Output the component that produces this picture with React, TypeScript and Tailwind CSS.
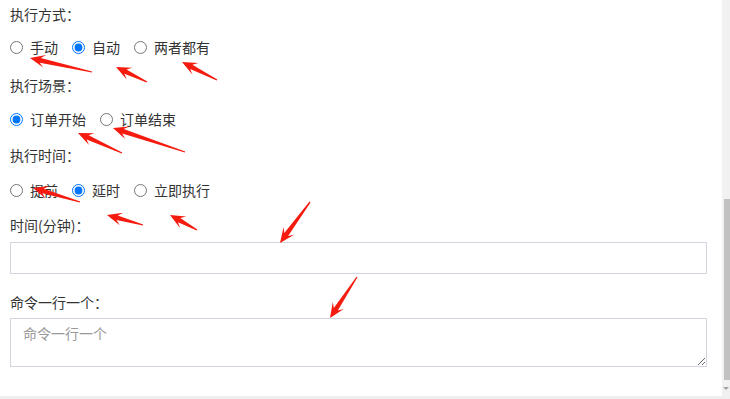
import React from 'react'

type Pt = [number, number]

// red annotation arrows: [tip, tail]
const arrows: [Pt, Pt][] = [
  [[30, 58], [92, 72]],
  [[116, 67], [147, 82]],
  [[182, 62], [217, 80]],
  [[78, 133], [122, 153]],
  [[113, 128], [185, 152]],
  [[33, 188], [80, 202]],
  [[107, 215], [143, 225]],
  [[170, 215], [197, 230]],
  [[280, 243], [310, 202]],
  [[330, 318], [357, 277]],
]

function arrowPoints(tip: Pt, tail: Pt) {
  const dx = tail[0] - tip[0]
  const dy = tail[1] - tip[1]
  const len = Math.hypot(dx, dy)
  const ux = dx / len
  const uy = dy / len
  const px = -uy
  const py = ux
  const L = 15
  const W = 6.5
  const at = (d: number, w: number): string =>
    `${(tip[0] + ux * d + px * w).toFixed(1)},${(tip[1] + uy * d + py * w).toFixed(1)}`
  return [
    at(0, 0),
    at(L, W),
    at(L * 0.7, 2.4),
    at(len, 0.6),
    at(len, -0.6),
    at(L * 0.7, -2.4),
    at(L, -W),
  ].join(' ')
}

const font = { fontFamily: '"Noto Sans CJK SC", "Microsoft YaHei", sans-serif' }

function RadioRow({ name, items, checked }: { name: string; items: string[]; checked: number }) {
  return (
    <div className="flex items-center gap-[14px] h-[20px]">
      {items.map((item, idx) => (
        <label key={item} className="flex items-center gap-[7px] cursor-pointer">
          <input type="radio" name={name} defaultChecked={idx === checked} className="w-[13px] h-[13px] m-0" />
          <span className="leading-[20px]">{item}</span>
        </label>
      ))}
    </div>
  )
}

export default function App() {
  return (
    <div className="w-[730px] h-[399px] flex flex-col bg-white text-[14px] text-[#333] relative overflow-hidden" style={font}>
      <div className="flex flex-1">
        <div className="flex-1 pt-[4px] pl-[10px] pr-[15px] flex flex-col">
          <div className="h-[20px] leading-[20px]">执行方式：</div>
          <div className="mt-[13px]">
            <RadioRow name="mode" items={['手动', '自动', '两者都有']} checked={1} />
          </div>
          <div className="mt-[18px] h-[20px] leading-[20px]">执行场景：</div>
          <div className="mt-[14px]">
            <RadioRow name="scene" items={['订单开始', '订单结束']} checked={0} />
          </div>
          <div className="mt-[16px] h-[20px] leading-[20px]">执行时间：</div>
          <div className="mt-[15px]">
            <RadioRow name="time" items={['提前', '延时', '立即执行']} checked={1} />
          </div>
          <div className="mt-[15px] h-[20px] leading-[20px]">时间(分钟)：</div>
          <input
            type="text"
            className="mt-[7px] w-[697px] h-[32px] border border-[#d4d4de] px-[12px] outline-none"
          />
          <div className="mt-[18px] h-[20px] leading-[20px]">命令一行一个：</div>
          <textarea
            placeholder="命令一行一个"
            className="mt-[6px] w-[697px] h-[49px] border border-[#d4d4de] px-[12px] pt-[4px] leading-[20px] outline-none placeholder:text-[#999]"
          />
        </div>
        <div className="w-[8px] bg-[#f1f1f1] flex flex-col items-end">
          <div className="h-[199px]" />
          <div className="w-[6px] h-[181px] bg-[#c1c1c1]" />
          <div className="flex-1 flex items-center justify-center w-full">
            <div className="w-0 h-0 border-l-[3px] border-r-[3px] border-t-[3px] border-l-transparent border-r-transparent border-t-[#a3a3a3]" />
          </div>
        </div>
      </div>
      <div className="h-[3px] bg-[#eef0ee]" />
      <svg className="absolute left-0 top-0 pointer-events-none" width="730" height="399">
        {arrows.map(([tip, tail], i) => (
          <polygon key={i} points={arrowPoints(tip, tail)} fill="#f51b0f" />
        ))}
      </svg>
    </div>
  )
}
